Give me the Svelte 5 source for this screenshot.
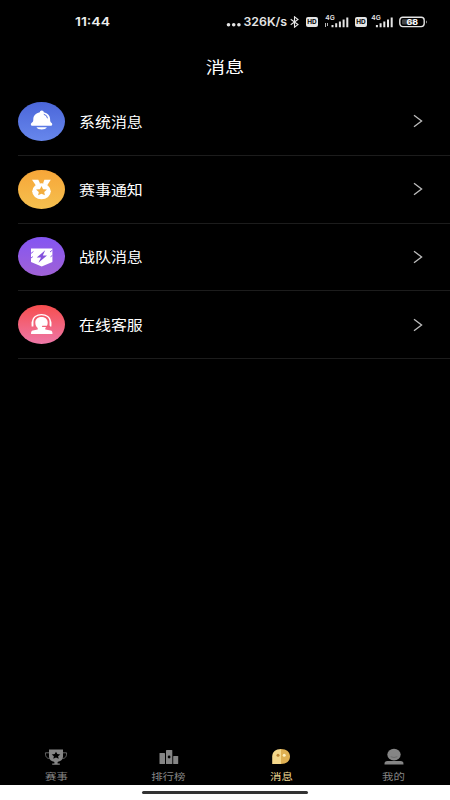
<script>
  const messages = [
    { id: 'system', label: '系统消息', from: '#4b66d9', to: '#6787ec' },
    { id: 'match', label: '赛事通知', from: '#f7a638', to: '#f5c04f' },
    { id: 'team', label: '战队消息', from: '#8455f3', to: '#a062d6' },
    { id: 'service', label: '在线客服', from: '#f74e4e', to: '#ee78a8' },
  ];

  const tabs = [
    { id: 'match', label: '赛事' },
    { id: 'rank', label: '排行榜' },
    { id: 'message', label: '消息' },
    { id: 'mine', label: '我的' },
  ];

  const active = 'message';
</script>

{#snippet hd()}
  <svg class="hd" width="12" height="10" viewBox="0 0 12 10">
    <rect width="12" height="10" rx="2" fill="#e4e4e4" />
    <text x="1.3" y="7.3" font-size="6.3" font-weight="700" fill="#000" textLength="9.4" lengthAdjust="spacingAndGlyphs">HD</text>
  </svg>
{/snippet}

{#snippet signal(arrows)}
  <svg class="signal" class:compact={!arrows} width="25" height="14" viewBox="0 0 25 14" fill="#e4e4e4">
    <text x="1.3" y="5.8" font-size="6.5" font-weight="600" textLength="9.5" lengthAdjust="spacingAndGlyphs">4G</text>
    {#if arrows}
      <path d="M1 9h1v4H1zM3 9h1v3H3z" opacity=".8" />
    {/if}
    <path transform={arrows ? undefined : 'translate(-1.6 0)'} d="M7.500 11h2V13.200h-2zM11.200 9.300h2v3.900h-2zM14.900 7.500h2v5.700h-2zM18.600 5.500h2v7.700h-2zM22.300 3.500h2v9.700h-2z" />
  </svg>
{/snippet}

<div class="screen">
  <div class="status">
    <svg class="clock" width="36" height="14" viewBox="0 0 36 14">
      <text x="0" y="11" font-size="12" font-weight="600" fill="#eee" textLength="35" lengthAdjust="spacingAndGlyphs">11:44</text>
    </svg>
    <svg class="speed" width="62" height="14" viewBox="0 0 62 14" fill="#e4e4e4">
      <circle cx="2.500" cy="9.800" r="1.800" />
      <circle cx="7.700" cy="9.800" r="1.800" />
      <circle cx="12.900" cy="9.800" r="1.800" />
      <text x="17.500" y="11" font-size="11.500" font-weight="600" textLength="43.500" lengthAdjust="spacingAndGlyphs">326K/s</text>
    </svg>
    <svg class="bluetooth" width="9" height="12" viewBox="0 0 9 12" fill="none" stroke="#e4e4e4" stroke-width="1.1">
      <path d="M.7 3.2 8 8.5 4.5 11.2V.8L8 3.5.7 8.8" />
    </svg>
    {@render hd()}
    {@render signal(true)}
    {@render hd()}
    {@render signal(false)}
    <svg class="battery" width="29" height="12" viewBox="0 0 29 12">
      <rect x=".8" y="1.200" width="24.400" height="9.400" rx="3" fill="none" stroke="#e4e4e4" stroke-width="1.400" />
      <rect x="3" y="3.300" width="13" height="5.200" rx="1" fill="#444" />
      <path d="M27 4.300q1.600 1.600 0 3.400z" fill="#e4e4e4" />
      <text x="7.500" y="8.700" font-size="7.500" font-weight="700" fill="#fff" textLength="11.500" lengthAdjust="spacingAndGlyphs">68</text>
    </svg>
  </div>

  <header><h1>消息</h1></header>

  <ul class="list">
    {#each messages as item}
      <li>
        <svg class="badge" width="47" height="39" viewBox="0 0 47 39">
          <defs>
            <linearGradient id="bg-{item.id}" x1="0" y1="0" x2="0" y2="1">
              <stop offset="0" stop-color={item.from} />
              <stop offset="1" stop-color={item.to} />
            </linearGradient>
          </defs>
          <ellipse cx="23.5" cy="19.5" rx="23.5" ry="19.5" fill="url(#bg-{item.id})" />
          {#if item.id === 'system'}
            <path d="M21.800 10.200a2 1.700 0 0 1 4 0c4 .9 6.300 3.600 6.300 7 0 2.400.5 3 1.600 3.700.9.6.7 2.900-.8 2.900H14.200c-1.500 0-1.800-2.300-.7-2.900 1.300-.8 1.800-1.400 1.800-3.700 0-3.400 2.500-6.100 6.500-7z" fill="#fff" />
            <path d="M18.500 25.300h10.300c-1.200 3-9.100 3-10.300 0z" fill="#fff" />
            <path d="M25.800 12.300q3.400.8 3.700 4" fill="none" stroke="#5870dc" stroke-width="1" />
          {:else if item.id === 'match'}
            <path d="M14 9.800h6.300l1.800 3.800-4.200 1.800zM26.400 9.800h6.400L29.200 15.300l-4.200-1.700z" fill="#fff" />
            <ellipse cx="23.500" cy="21.300" rx="9.300" ry="8" fill="#fff" />
            <path d="m23.500 16 1.600 3.200 3.900.4-2.800 2.300.7 3.400-3.400-1.600-3.400 1.600.7-3.400-2.800-2.300 3.900-.4z" fill="#f3ae3e" />
          {:else if item.id === 'team'}
            <path d="M13 11.400h21.400v13.500l-10.700 4.600L13 24.900z" fill="#fff" />
            <path d="m27.200 13.300-8.500 7.300h4.300l-2.600 5.200 8.600-7.200h-4.200z" fill="#8452dc" />
            <path d="m13 16.400 2.400-1.900M32 15l2.400-1.900M13 21l1.900-1.400M32.500 19.800l1.900-1.400" stroke="#8c59e6" />
          {:else}
            <path d="M14.500 20v-2.500c0-10.600 18-10.600 18 0V20" fill="none" stroke="#fff" stroke-width="1.200" />
            <path d="M13.600 16.500h1.800v5h-1.800zM31.600 16.500h1.800v5h-1.800z" fill="#fff" />
            <path d="M17.300 17.500c0-7.300 12.400-7.300 12.400 0 0 2.600-.9 4.400-2.400 5.400v1.500l5.300 1.200c1.400.3 1.900 1 1.900 3.400H13c0-2.400.5-3.100 1.900-3.400l4.800-1.200v-1.500c-1.500-1-2.400-2.800-2.400-5.400z" fill="#fff" />
            <path d="M31.500 21.300h-7" stroke="#ef6179" stroke-width="1.200" stroke-linecap="round" />
          {/if}
        </svg>
        <span class="label">{item.label}</span>
        <svg class="arrow" width="10" height="14" viewBox="0 0 10 14" fill="none" stroke="#bdbdbd" stroke-width="1.3">
          <path d="m1 1.200 7.600 5.800L1 12.800" />
        </svg>
      </li>
    {/each}
  </ul>

  <nav>
    {#each tabs as tab}
      <div class="tab" class:active={tab.id === active}>
        <svg width="24" height="18" viewBox="0 0 24 18" fill="#858585">
          {#if tab.id === 'match'}
            <path d="M5 1.6h14v7c0 3-2.5 5-5.4 5.300v1.500h2.200v1.400H8.200v-1.400h2.200v-1.500C7.500 13.600 5 11.600 5 8.600z" />
            <path d="M5 4.800H1.400c0 4 1.200 5.700 4.600 5.700M19 4.800h3.600c0 4-1.200 5.700-4.600 5.700" fill="none" stroke="#666" />
            <path d="m12 3.800 1.300 2.300 3 .3-2.200 1.800.6 2.600-2.700-1.300-2.700 1.300.6-2.600-2.200-1.800 3-.3z" fill="#000" />
          {:else if tab.id === 'rank'}
            <rect x="2.500" y="5" width="5.500" height="11" rx=".6" />
            <rect x="9" y="2" width="6.300" height="14" rx=".6" />
            <rect x="16.200" y="8" width="5" height="8" rx=".6" />
            <circle cx="12.100" cy="9" r="1.400" fill="#000" />
          {:else if tab.id === 'message'}
            <path d="M12 1C6.500 1 3.200 4 3.200 8.500V16H12z" fill="#f5d88a" />
            <path d="M12 1c5.500 0 9 3 9 7.500S17.500 16 12 16z" fill="#dfb052" />
            <circle cx="9" cy="7.300" r="1.500" fill="#bb8533" />
            <circle cx="15.200" cy="7.300" r="1.500" fill="#fff0bd" />
          {:else}
            <ellipse cx="12" cy="6.600" rx="6.700" ry="5.900" />
            <path d="M2.500 16.500c0-2.800.7-3.600 3-3.600h13c2.300 0 3 .8 3 3.600z" />
            <path d="M8.700 8.700q3.300 1.600 6.600 0" fill="none" stroke="#666" stroke-width=".8" />
          {/if}
        </svg>
        <span>{tab.label}</span>
      </div>
    {/each}
  </nav>

  <div class="gesture"><div class="pill"></div></div>
</div>

<style>
  :global(body) {
    background: #000;
  }

  .screen {
    display: flex;
    flex-direction: column;
    height: 800px;
    background: #000;
    color: #fff;
    font-family: "Noto Sans CJK SC", sans-serif;
  }

  svg {
    display: block;
    flex: none;
  }

  .status {
    display: flex;
    align-items: center;
    box-sizing: border-box;
    height: 43px;
    padding-top: 1px;
    padding-left: 75px;
    font-family: Inter, "Liberation Sans", sans-serif;
  }

  .speed {
    margin-left: 115px;
  }

  .bluetooth {
    margin-left: 2px;
  }

  .hd {
    margin-left: 7px;
  }

  .signal {
    margin-left: 6px;
    margin-top: -2px;
  }

  .signal + .hd {
    margin-left: 6px;
  }

  .signal.compact {
    margin-left: 3px;
  }

  .battery {
    margin-left: 4px;
  }

  header {
    display: flex;
    align-items: center;
    justify-content: center;
    box-sizing: border-box;
    height: 45px;
    padding-top: 1px;
  }

  h1 {
    margin: 0;
    font-size: 16px;
    font-weight: 400;
    line-height: 24px;
    transform: scaleX(1.2);
  }

  .list {
    flex: 1;
    margin: 0;
    padding: 0 0 0 18px;
    list-style: none;
  }

  .list li {
    display: flex;
    align-items: center;
    box-sizing: border-box;
    height: 67.75px;
    padding-right: 27px;
    border-bottom: 1px solid #1c1c1c;
  }

  .label {
    margin-left: 14px;
    padding-top: 1px;
    font-size: 13.3px;
    line-height: 20px;
    transform: scaleX(1.2);
    transform-origin: left;
  }

  .arrow {
    margin-left: auto;
  }

  nav {
    display: flex;
    height: 38px;
  }

  .tab {
    flex: 1;
    display: flex;
    flex-direction: column;
    align-items: center;
    padding-top: 1px;
    color: #858585;
  }

  .tab span {
    margin-top: 3px;
    font-size: 9.5px;
    line-height: 14px;
    transform: scaleX(1.2);
  }

  .tab.active {
    color: #f3dc96;
  }

  .gesture {
    display: flex;
    justify-content: center;
    box-sizing: border-box;
    height: 15px;
    padding-top: 6px;
    background: #fff;
  }

  .pill {
    width: 166px;
    height: 3px;
    border-radius: 2px;
    background: #333;
  }
</style>
